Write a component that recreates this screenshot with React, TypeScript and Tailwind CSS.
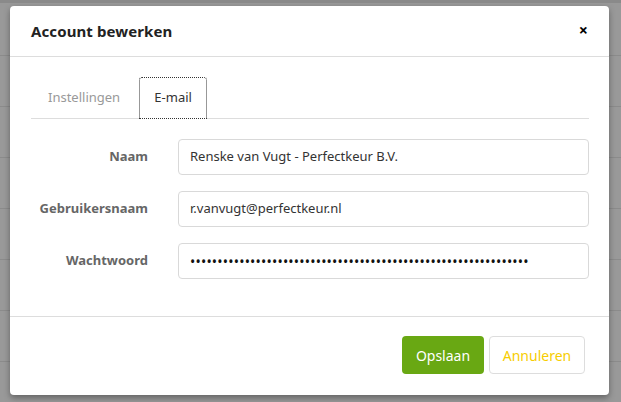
import React from "react";

export default function App() {
  const font = { fontFamily: '"Noto Sans", "Open Sans", sans-serif' };
  return (
    <div
      className="w-[621px] h-[402px] overflow-hidden bg-[#999999] bg-[repeating-linear-gradient(to_bottom,transparent_0px,transparent_50px,#8b8b8b_50px,#8b8b8b_51px)] bg-[position:0_2px] pt-[5px] pl-[10px] border-t-[3px] border-[#8a8a8a]"
      style={font}
    >
      <div className="w-[599px] h-[389px] -mt-[2px] bg-white rounded-[4px] shadow-[0_3px_6px_rgba(0,0,0,0.35)] flex flex-col">
        {/* header */}
        <div className="h-[51px] flex items-center justify-between pl-[21px] pr-[21px] border-b border-[#dddddd]">
          <div className="text-[15px] font-bold text-[#222] tracking-[0.1px]">Account bewerken</div>
          <div className="text-[16px] font-bold text-black leading-none -mt-[3px]">×</div>
        </div>
        {/* body */}
        <div className="flex-1 pl-[21px] pr-[20px] pt-[20px]">
          <div className="flex items-end border-b border-[#dddddd] h-[42px]">
            <div className="pl-[17px] pr-[18px] h-[41px] flex items-center text-[13px] text-[#999]">Instellingen</div>
            <div className="ml-[1px] w-[68px] h-[42px] -mb-px flex items-center justify-center text-[13px] text-[#333] border border-dotted border-[#333] rounded-t-[3px] bg-white">
              E-mail
            </div>
          </div>
          <div className="flex flex-col gap-[16px] mt-[20px]">
            {[
              ["Naam", "Renske van Vugt - Perfectkeur B.V."],
              ["Gebruikersnaam", "r.vanvugt@perfectkeur.nl"],
            ].map(([l, v]) => (
              <div key={l} className="flex items-center">
                <div className="w-[117px] shrink-0 text-right text-[13px] font-bold text-[#666]">{l}</div>
                <div className="ml-[30px] w-[411px] shrink-0 h-[36px] border border-[#d9d9d9] rounded-[4px] flex items-center pl-[11px] text-[13px] text-[#333]">
                  {v}
                </div>
              </div>
            ))}
            <div className="flex items-center">
              <div className="w-[117px] shrink-0 text-right text-[13px] font-bold text-[#666]">Wachtwoord</div>
              <div className="ml-[30px] w-[411px] shrink-0 h-[36px] border border-[#d9d9d9] rounded-[4px] flex items-center pl-[11px] text-[14px] tracking-[0.2px] text-[#111] overflow-hidden whitespace-nowrap">
                {"•".repeat(62)}
              </div>
            </div>
          </div>
        </div>
        {/* footer */}
        <div className="h-[79px] border-t border-[#dddddd] flex items-center justify-end pr-[24px] gap-[5px] pb-[2px]">
          <div className="w-[82px] h-[38px] rounded-[4px] bg-[#69a813] text-white text-[14px] flex items-center justify-center">
            Opslaan
          </div>
          <div className="w-[96px] h-[38px] rounded-[4px] border border-[#dddddd] bg-white text-[#f7cd00] text-[14px] flex items-center justify-center">
            Annuleren
          </div>
        </div>
      </div>
    </div>
  );
}
